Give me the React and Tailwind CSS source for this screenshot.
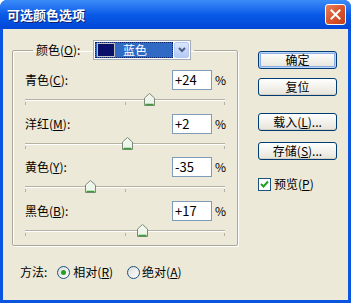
import React from 'react'

const font = { fontFamily: '"Noto Sans CJK SC", "Liberation Sans", sans-serif' }

const rows = [
  { label: '青色', key: 'C', value: 24 },
  { label: '洋红', key: 'M', value: 2 },
  { label: '黄色', key: 'Y', value: -35 },
  { label: '黑色', key: 'B', value: 17 },
]

const Thumb = () => (
  <svg width="11" height="13" viewBox="0 0 11 13">
    <path d="M5.5 0.5 L10.5 5 L10.5 12.5 L0.5 12.5 L0.5 5 Z" fill="#eef5ea" stroke="#7b8a78" />
    <path d="M1.5 11.5 L9.5 11.5" stroke="#3d9b35" strokeWidth="1.5" />
    <path d="M1.5 5.5 L5.5 1.8" stroke="#ffffff" />
  </svg>
)

const SliderRow = ({ label, mn, value }) => (
  <div className="h-[43.5px] pl-[12px] pr-[9px]">
    <div className="flex items-center h-[20px] pr-[2px]">
      <span className="flex-1 text-[12px]">
        {label}(<span className="underline">{mn}</span>):
      </span>
      <div className="w-[40px] h-[20px] bg-white border border-[#7f9db9] pl-[2px] text-[13px] leading-[18px]">
        {value > 0 ? `+${value}` : value}
      </div>
      <span className="w-[14px] text-right text-[12px]">%</span>
    </div>
    <div className="relative mt-[9px] w-[200px] h-[2px] border-t border-[#b5b2a4] border-b border-b-white">
      <div className="absolute left-0 top-[2px] w-px h-[3px] bg-[#b5b2a4]" />
      <div className="absolute left-[100px] top-[2px] w-px h-[3px] bg-[#b5b2a4]" />
      <div className="absolute right-0 top-[2px] w-px h-[3px] bg-[#b5b2a4]" />
      <div className="absolute top-[-7px]" style={{ left: 100 + value - 5 }}>
        <Thumb />
      </div>
    </div>
  </div>
)

const Button = ({ children, primary }) => (
  <button
    className={`w-[79px] h-[18px] rounded-[3px] border border-[#003c74] text-[12px] leading-[14px] bg-gradient-to-b from-white to-[#e6e4d9] ${
      primary ? 'shadow-[inset_0_0_0_1px_#bcd4f6,inset_0_0_0_2px_#89ade4]' : 'shadow-[inset_0_-1px_0_#d6d0c5]'
    }`}
  >
    {children}
  </button>
)

const Radio = ({ checked }) => (
  <span className="w-[13px] h-[13px] rounded-full border border-[#1c5180] bg-gradient-to-br from-[#dcdcd6] to-white flex items-center justify-center">
    {checked && <span className="w-[5px] h-[5px] rounded-full bg-[#21a121]" />}
  </span>
)

export default function App() {
  return (
    <div className="w-[351px] h-[303px] flex flex-col bg-[#0a55e0] rounded-t-[7px] overflow-hidden" style={font}>
      <div className="h-[29px] flex items-center pl-[7px] pr-[5px] bg-gradient-to-b from-[#3b8cf8] via-[#0a5ae8] to-[#0246d6]">
        <span className="flex-1 text-white font-bold text-[13px] [text-shadow:1px_1px_0_#0a1e6e]">可选颜色选项</span>
        <div className="w-[21px] h-[21px] rounded-[3px] border border-white bg-gradient-to-br from-[#e8805c] via-[#d9552c] to-[#c2401c] flex items-center justify-center">
          <svg width="11" height="11" viewBox="0 0 11 11">
            <path d="M1.5 1.5 L9.5 9.5 M9.5 1.5 L1.5 9.5" stroke="white" strokeWidth="2" strokeLinecap="square" />
          </svg>
        </div>
      </div>
      <div className="flex-1 mx-[3px] mb-[3px] bg-[#ece9d8] text-black pt-[11px] pl-[9px]">
        <div className="flex">
          <fieldset className="w-[226px] h-[206px] border border-[#aca899] rounded-[2px] shadow-[inset_1px_1px_0_#fff,1px_1px_0_#fff]">
            <legend className="ml-[20px] px-[3px] flex items-center h-[20px]">
              <span className="text-[12px] w-[57px]">
                颜色(<span className="underline">O</span>):
              </span>
              <div className="w-[98px] h-[20px] border border-[#a5acb5] bg-white flex items-center p-[1px]">
                <div className="flex-1 h-full bg-[#316ac5] flex items-center outline outline-1 outline-dotted outline-[#0a246a] outline-offset-[-1px]">
                  <div className="w-[18px] h-[14px] ml-[2px] bg-[#0a0f6a] border border-[#c0c0c0]" />
                  <span className="ml-[8px] text-white text-[12px]">蓝色</span>
                </div>
                <div className="w-[15px] h-full ml-[1px] rounded-[2px] border border-[#b5c8f0] bg-gradient-to-b from-[#dbe6fd] to-[#b3c9f5] flex items-center justify-center">
                  <svg width="8" height="6" viewBox="0 0 8 6">
                    <path d="M1 1 L4 4 L7 1" stroke="#4d6185" strokeWidth="2" fill="none" />
                  </svg>
                </div>
              </div>
            </legend>
            <div className="pt-[10px]">
              {rows.map((r) => (
                <SliderRow key={r.key} label={r.label} mn={r.key} value={r.value} />
              ))}
            </div>
          </fieldset>
          <div className="ml-[20px] pt-[11px] flex flex-col">
            <Button primary>确定</Button>
            <div className="h-[9px]" />
            <Button>复位</Button>
            <div className="h-[17px]" />
            <Button>
              载入(<span className="underline">L</span>)...
            </Button>
            <div className="h-[11px]" />
            <Button>
              存储(<span className="underline">S</span>)...
            </Button>
            <div className="flex items-center mt-[15px] text-[12px]">
              <span className="w-[13px] h-[13px] border border-[#1c5180] bg-white flex items-center justify-center">
                <svg width="9" height="9" viewBox="0 0 9 9">
                  <path d="M1 4 L3.5 6.5 L8 1.5" stroke="#21a121" strokeWidth="2" fill="none" />
                </svg>
              </span>
              <span className="ml-[3px]">
                预览(<span className="underline">P</span>)
              </span>
            </div>
          </div>
        </div>
        <div className="flex items-center mt-[16px] pl-[8px] h-[20px] text-[12px]">
          <span>方法:</span>
          <span className="ml-[10px]"><Radio checked /></span>
          <span className="ml-[3px]">
            相对(<span className="underline">R</span>)
          </span>
          <span className="ml-[14px]"><Radio /></span>
          <span className="ml-[2px]">
            绝对(<span className="underline">A</span>)
          </span>
        </div>
      </div>
    </div>
  )
}
